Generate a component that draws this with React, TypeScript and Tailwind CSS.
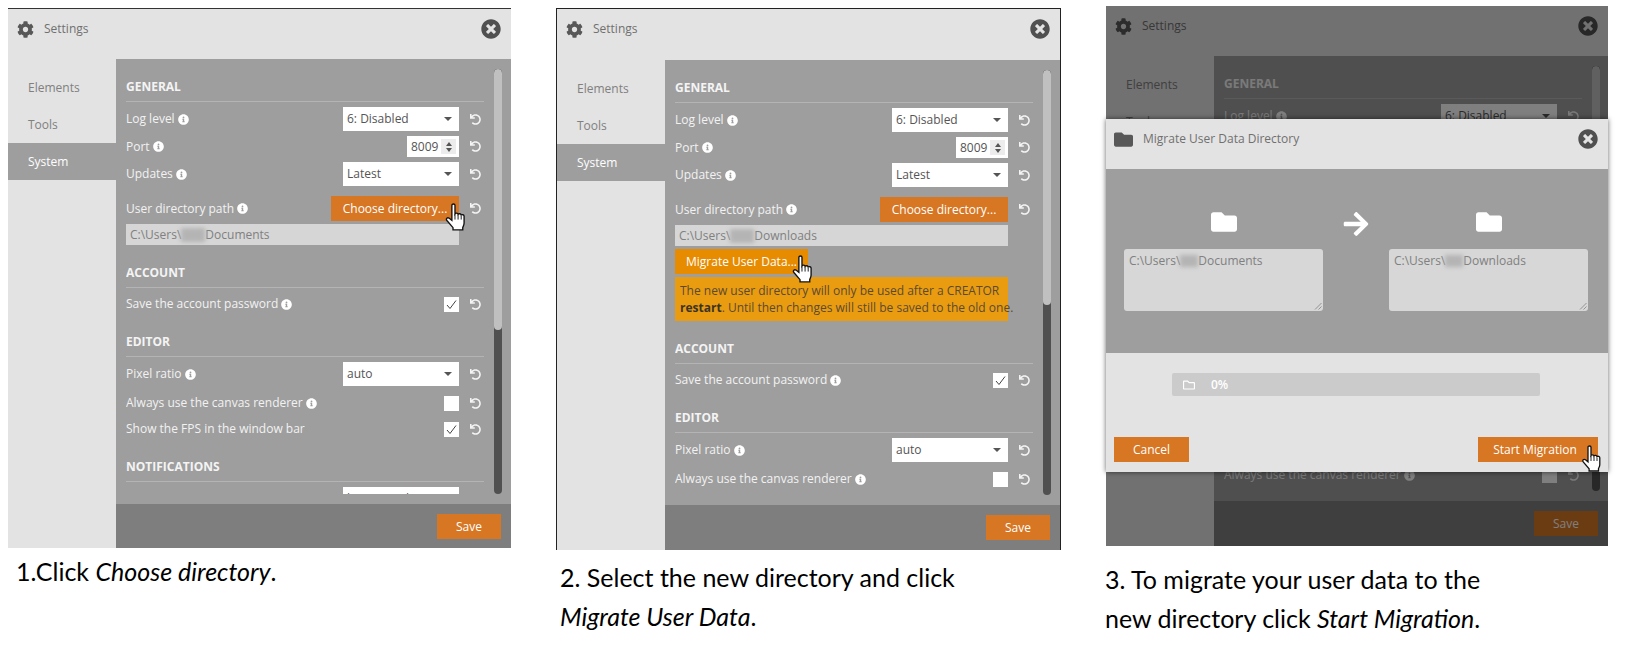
import React from "react";
import { FaCog, FaTimesCircle, FaInfoCircle, FaUndo, FaFolder, FaRegFolder, FaArrowRight } from "react-icons/fa";

const openSans = "font-['Open_Sans',sans-serif]";

function Hand({ className }: { className: string }) {
  return (
    <svg viewBox="0 0 20 28" className={className}>
      <path
        d="M6.5 2.2c0-1.6 3-1.6 3 0v8.3c.6-1 2.7-1 3 .4.7-.9 2.7-.7 3 .7.8-.7 2.8-.4 2.8 1.2v6.6c0 2-.8 3-1.3 4.2v2.4H7.6v-2.2L1.7 16.900c-1.300-1.700.500-3.400 2.300-2.100l2.500 2z"
        fill="#fff"
        stroke="#111"
        strokeWidth="1.3"
      />
      <path d="M9.500 11v5M12.500 11.500v4.500M15.500 12.500v3.500" stroke="#111" strokeWidth="0.900" fill="none" />
    </svg>
  );
}

function Undo() {
  return <FaUndo className="text-[11px] text-[#f4f4f4]" />;
}

function Label({ text, info = true }: { text: string; info?: boolean }) {
  return (
    <div className="flex-1 flex items-center gap-[3px] text-[12px] text-[#f2f2f2] whitespace-nowrap">
      {text}
      {info && <FaInfoCircle className="text-[11px] text-white" />}
    </div>
  );
}

function Row({ label, info, children, className = "" }: { label: string; info?: boolean; children: React.ReactNode; className?: string }) {
  return (
    <div className={`flex items-center ${className}`}>
      <Label text={label} info={info} />
      {children}
      <div className="w-[25px] flex justify-center pl-[9px] pr-[2px]">
        <Undo />
      </div>
    </div>
  );
}

function Select({ value }: { value: string }) {
  return (
    <div className="w-[116px] h-[24px] bg-white flex items-center justify-between pl-[4px] pr-[7px] text-[12px] text-[#555]">
      {value}
      <span className="w-0 h-0 border-x-[4px] border-x-transparent border-t-[4px] border-t-[#555]" />
    </div>
  );
}

function Check({ checked }: { checked: boolean }) {
  return (
    <div className="w-[15px] h-[15px] bg-white flex items-center justify-center">
      {checked && (
        <svg viewBox="0 0 15 15" className="w-[15px] h-[15px]">
          <path d="M3 8l3 3.500 6-8" fill="none" stroke="#444" strokeWidth="1" />
        </svg>
      )}
    </div>
  );
}

function Heading({ text, className = "" }: { text: string; className?: string }) {
  return (
    <div className={`h-[25px] border-b border-[#b4b4b4] text-[12px] leading-[20px] font-bold text-[#f4f4f4] ${className}`}>
      {text}
    </div>
  );
}

function PathBar({ name, blur }: { name: string; blur: string }) {
  return (
    <div className="w-[333px] h-[21px] bg-[#d6d6d6] flex items-center pl-[4px] text-[12px] text-[#808080]">
      C:\Users\
      <span className={`h-[14px] bg-[#b4b4b4] blur-[2px] ${blur}`} />
      {name}
    </div>
  );
}

function OrangeButton({ text, className = "" }: { text: string; className?: string }) {
  return (
    <div className={`h-[25px] bg-[#d77623] flex items-center justify-center text-[12px] text-white ${className}`}>
      {text}
    </div>
  );
}

function General({ children }: { children: React.ReactNode }) {
  return (
    <>
      <Heading text="GENERAL" className="mt-[8px]" />
      <Row label="Log level" className="mt-[5px]">
        <Select value="6: Disabled" />
      </Row>
      <Row label="Port" className="mt-[5px]">
        <div className="w-[52px] h-[21px] bg-white flex items-center justify-between pl-[4px] pr-[3px] text-[12px] text-[#555]">
          8009
          <span className="w-[15px] h-[15px] bg-[#ececec] flex flex-col items-center justify-center gap-[2px]">
            <span className="w-0 h-0 border-x-[3.500px] border-x-transparent border-b-[4px] border-b-[#555]" />
            <span className="w-0 h-0 border-x-[3.500px] border-x-transparent border-t-[4px] border-t-[#555]" />
          </span>
        </div>
      </Row>
      <Row label="Updates" className="mt-[5px]">
        <Select value="Latest" />
      </Row>
      {children}
    </>
  );
}

function AccountEditor() {
  return (
    <>
      <Heading text="ACCOUNT" className="mt-[18px]" />
      <Row label="Save the account password" className="mt-[7px]">
        <Check checked />
      </Row>
      <Heading text="EDITOR" className="mt-[19px]" />
      <Row label="Pixel ratio" className="mt-[5px]">
        <Select value="auto" />
      </Row>
      <Row label="Always use the canvas renderer" className="mt-[8px]">
        <Check checked={false} />
      </Row>
      <Row label="Show the FPS in the window bar" info={false} className="mt-[8px]">
        <Check checked />
      </Row>
    </>
  );
}

function FirstContent() {
  return (
    <>
      <General>
        <Row label="User directory path" className="mt-[10px]">
          <div className="relative">
            <OrangeButton text="Choose directory..." className="w-[128px]" />
            <Hand className="absolute left-[114px] top-[7px] w-[21px] h-[29px]" />
          </div>
        </Row>
        <div className="mt-[3px]">
          <PathBar name="Documents" blur="w-[24px]" />
        </div>
      </General>
      <AccountEditor />
      <Heading text="NOTIFICATIONS" className="mt-[19px]" />
      <Row label="Position" info={false} className="mt-[5px]">
        <Select value="bottom right" />
      </Row>
    </>
  );
}

function SecondContent({ cursor = true }: { cursor?: boolean }) {
  return (
    <>
      <General>
        <Row label="User directory path" className="mt-[10px]">
          <OrangeButton text="Choose directory..." className="w-[128px]" />
        </Row>
        <div className="mt-[3px]">
          <PathBar name="Downloads" blur="w-[24px]" />
        </div>
        <div className="relative w-[133px] mt-[3px]">
          <div className="h-[25px] bg-[#e78b00] flex items-center justify-center text-[12px] text-white">Migrate User Data...</div>
          {cursor && <Hand className="absolute left-[117px] top-[6px] w-[21px] h-[29px]" />}
        </div>
        <div className="w-[333px] h-[44px] mt-[3px] bg-[#ea9c10] px-[5px] py-[5px] text-[12px] leading-[17px] text-[#5a4a30] whitespace-nowrap">
          The new user directory will only be used after a CREATOR
          <br />
          <b className="text-[#3c3325]">restart</b>. Until then changes will still be saved to the old one.
        </div>
      </General>
      <AccountEditor />
    </>
  );
}

function Panel({
  content,
  thumb,
  topBorder = "",
  headerClass = "h-[50px]",
  footerClass = "h-[45px]",
  dim = false,
  children,
}: {
  content: React.ReactNode;
  thumb: string;
  topBorder?: string;
  headerClass?: string;
  footerClass?: string;
  dim?: boolean;
  children?: React.ReactNode;
}) {
  return (
    <div className={`relative ${openSans} ${topBorder}`}>
      <div className={`bg-[#e3e3e3] flex items-start justify-between pl-[9px] pr-[10px] pt-[10px] ${headerClass}`}>
        <div className="flex items-center gap-[10px] text-[12px] text-[#707070] h-[20px]">
          <FaCog className="text-[17px] text-[#585858]" />
          Settings
        </div>
        <FaTimesCircle className="text-[20px] text-[#505050]" />
      </div>
      <div className="flex">
        <div className="w-[108px] bg-[#e3e3e3] pt-[10px] text-[12px] text-[#808080]">
          <div className="h-[37px] flex items-center pl-[20px]">Elements</div>
          <div className="h-[37px] flex items-center pl-[20px]">Tools</div>
          <div className="h-[37px] flex items-center pl-[20px] bg-[#9e9e9e] text-white">System</div>
        </div>
        <div className="flex-1">
          <div className="h-[445px] bg-[#9e9e9e] pt-[10px] pb-[10px] pl-[10px] flex">
            <div className="w-[358px] overflow-hidden">{content}</div>
            <div className="ml-[10px] w-[8px] rounded-full bg-[#505050] overflow-hidden">
              <div className={`bg-[#c0c0c0] rounded-full ${thumb}`} />
            </div>
          </div>
          <div className={`bg-[#7e7e7e] flex justify-end pt-[10px] pr-[10px] ${footerClass}`}>
            <OrangeButton text="Save" className="w-[64px]" />
          </div>
        </div>
      </div>
      {dim && <div className="absolute inset-0 bg-black/50" />}
      {children}
    </div>
  );
}

function MigrateBox({ path, blur }: { path: string; blur: string }) {
  return (
    <div className="relative w-[199px] h-[62px] rounded-[3px] bg-[#d7d7d7] px-[5px] py-[3px] text-[12px] leading-[18px] text-[#808080] flex items-start">
      C:\Users\
      <span className={`h-[12px] mt-[3px] bg-[#b4b4b4] blur-[2px] ${blur}`} />
      {path}
      <svg viewBox="0 0 8 8" className="absolute right-[1px] bottom-[1px] w-[8px] h-[8px]">
        <path d="M1 7.500L7.500 1M4.500 7.500L7.500 4.500" stroke="#777" strokeWidth="0.700" />
      </svg>
    </div>
  );
}

function MigrateModal() {
  return (
    <div className="absolute left-0 right-0 top-[113px] shadow-[0_0_5px_rgba(0,0,0,0.6)]">
      <div className="h-[50px] bg-[#e3e3e3] flex items-start justify-between pl-[8px] pr-[10px] pt-[10px]">
        <div className="flex items-center gap-[10px] h-[20px] text-[12px] text-[#707070]">
          <FaFolder className="text-[19px] text-[#585858]" />
          Migrate User Data Directory
        </div>
        <FaTimesCircle className="text-[20px] text-[#505050]" />
      </div>
      <div className="h-[184px] bg-[#9e9e9e] pl-[18px] pt-[40px]">
        <div className="flex items-start w-[464px] justify-between">
          <div className="flex flex-col items-center gap-[14px]">
            <FaFolder className="text-[30px] h-[26px] text-white" />
            <MigrateBox path="Documents" blur="w-[18px]" />
          </div>
          <FaArrowRight className="text-[28px] text-white mt-[1px]" />
          <div className="flex flex-col items-center gap-[14px]">
            <FaFolder className="text-[30px] h-[26px] text-white" />
            <MigrateBox path="Downloads" blur="w-[18px]" />
          </div>
        </div>
      </div>
      <div className="h-[119px] bg-[#e3e3e3] px-[8px] pt-[20px]">
        <div className="mx-[58px] w-[368px] h-[23px] rounded-[2px] bg-[#cbcbcb] flex items-center gap-[16px] pl-[11px] text-[12px] font-semibold text-white">
          <FaRegFolder className="text-[12px]" />
          0%
        </div>
        <div className="flex justify-between mt-[41px] pr-[2px]">
          <OrangeButton text="Cancel" className="w-[75px]" />
          <div className="relative">
            <OrangeButton text="Start Migration" className="w-[120px] pr-[6px]" />
            <Hand className="absolute left-[103px] top-[8px] w-[21px] h-[28px]" />
          </div>
        </div>
      </div>
    </div>
  );
}

const captionClass = "font-['Lato',sans-serif] text-[25px] leading-[39px] text-black";

export default function App() {
  return (
    <div className="w-[1635px] h-[661px] bg-white flex items-start overflow-hidden">
      <div className="ml-[8px] mt-[8px] w-[503px]">
        <Panel content={<FirstContent />} thumb="h-[261px]" topBorder="border-t border-[#333]" footerClass="h-[44px]" />
        <div className={`${captionClass} mt-[4px] pl-[8px]`}>
          1.Click <i>Choose directory</i>.
        </div>
      </div>
      <div className="ml-[45px] mt-[8px] w-[505px]">
        <Panel
          content={<SecondContent />}
          thumb="h-[235px]"
          topBorder="border-t border-x border-[#222]"
          headerClass="h-[51px]"
        />
        <div className={`${captionClass} mt-[8px] pl-[4px]`}>
          2. Select the new directory and click
          <br />
          <i>Migrate User Data</i>.
        </div>
      </div>
      <div className="ml-[45px] mt-[6px] w-[502px]">
        <Panel content={<SecondContent cursor={false} />} thumb="h-[235px]" dim>
          <MigrateModal />
        </Panel>
        <div className={`${captionClass} mt-[14px] -ml-[1px]`}>
          3. To migrate your user data to the
          <br />
          new directory click <i>Start Migration</i>.
        </div>
      </div>
    </div>
  );
}
